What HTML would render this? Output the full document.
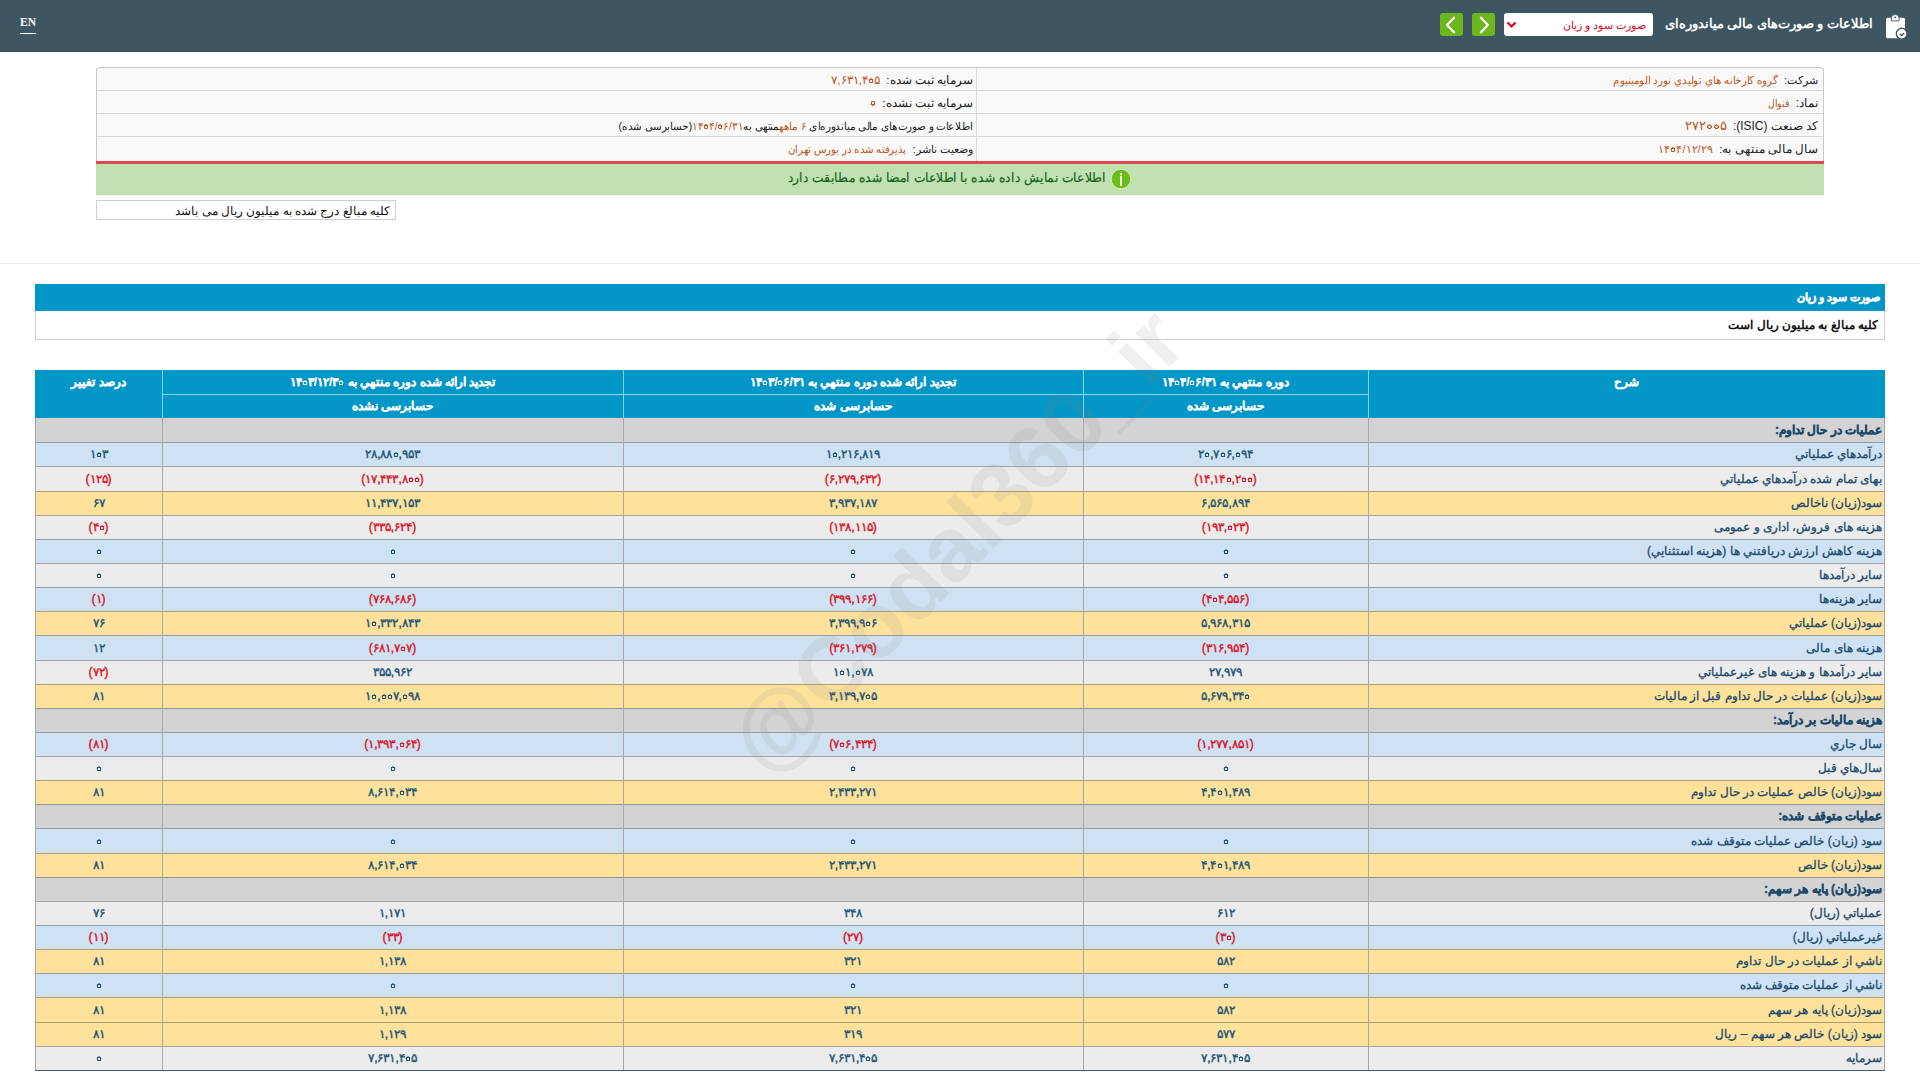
<!DOCTYPE html>
<html lang="fa" dir="rtl"><head><meta charset="utf-8"><title>Codal</title>
<style>
*{box-sizing:border-box}
html,body{margin:0;padding:0}
body{width:1920px;height:1080px;overflow:hidden;background:#fff;position:relative;font-family:"Liberation Sans",sans-serif;color:#222}
.abs{position:absolute}
#hdr{left:0;top:0;width:1920px;height:52px;background:#3e5562;border-bottom:1px solid #3b4a52}
#title{right:47px;top:14px;color:#fff;font-weight:bold;font-size:13px;white-space:nowrap;line-height:20px}
#sel{left:1504px;top:13px;width:149px;height:23px;background:#fff;border-radius:3px}
#sel span{position:absolute;right:6.5px;top:2.5px;font-size:11.3px;color:#d4081a;line-height:18px;white-space:nowrap}
.gbtn{top:13px;width:23px;height:23px;background:#6cb71c;border-radius:3px}
#en{left:20px;top:14px;font-family:"Liberation Serif",serif;color:#fff;font-size:13.5px;font-weight:bold;line-height:16px;text-decoration:underline;text-underline-offset:7px;text-decoration-thickness:1px;transform:scaleX(0.86);transform-origin:left top}
#info{left:96px;top:67px;width:1728px;height:128px;border:1px solid #c8c8c8;border-bottom:none;border-radius:4px 4px 0 0;background:#f9f9f9;overflow:hidden}
.ir{position:absolute;left:0;width:1726px;height:23px;border-bottom:1px solid #dadada}
.ic{position:absolute;top:0;height:23px;line-height:24px;font-size:11px;white-space:nowrap;color:#222}
.ic b{font-weight:normal;color:#c2561a}
#red{left:96px;top:161px;width:1728px;height:3px;background:#e34848}
#green{left:96px;top:164px;width:1728px;height:31px;background:#c1e1b3}
#gtext{right:814px;top:168px;color:#16651b;font-weight:normal;-webkit-text-stroke:0.2px #16651b;font-size:13px;transform:scaleX(0.945);transform-origin:right center;line-height:20px;white-space:nowrap}
#note{left:96px;top:200px;width:300px;height:20px;border:1px solid #cfcfcf;background:#fff}
#note span{position:absolute;right:5px;top:2px;font-size:12px;line-height:17px;color:#111;white-space:nowrap}
#hline{left:0;top:263px;width:1920px;height:1px;background:#ededed}
#tbar{left:35px;top:284px;width:1850px;height:27px;background:#0397c8}
#tbar span{position:absolute;right:5px;top:4px;color:#fff;font-weight:bold;font-size:11.2px;-webkit-text-stroke:0.45px #fff;line-height:18px;white-space:nowrap}
#sub{left:35px;top:311px;width:1850px;height:29px;border:1px solid #cfcfcf;border-top:none;background:#fff}
#sub span{position:absolute;right:6px;top:5px;color:#111;font-weight:bold;font-size:12px;line-height:18px;white-space:nowrap}
#thead{left:35px;top:370px;width:1850px;height:48px;background:#0397c8}
.hv{position:absolute;top:0;width:1px;background:#7fd3ef}
.hh{position:absolute;height:1px;background:#7fd3ef}
.ht{position:absolute;color:#fff;font-weight:bold;font-size:12px;-webkit-text-stroke:0.2px #fff;line-height:18px;white-space:nowrap;text-align:center}
.row{position:absolute;left:35px;width:1850px}
.rl{position:absolute;right:3px;color:#1b4a6b;font-size:12px;white-space:nowrap;-webkit-text-stroke:0.3px #1b4a6b}
.rl.s{font-weight:bold;-webkit-text-stroke:0.35px #1b4a6b}
.n{position:absolute;color:#1c5475;font-size:12px;white-space:nowrap;text-align:center;font-weight:normal;-webkit-text-stroke:0.4px currentColor}
.n.neg{color:#dc1426}
.z{-webkit-text-fill-color:transparent;-webkit-text-stroke-color:transparent;background:radial-gradient(circle at 50% 56%, transparent 1.0px, currentColor 1.3px, currentColor 2.2px, transparent 2.6px)}
.vl{position:absolute;width:1px;background:#a8a8a8}
.hl{position:absolute;left:35px;width:1850px;height:1px;background:rgba(0,0,0,0.3)}
</style></head><body>

<div id="hdr" class="abs"></div>
<svg class="abs" style="left:1884px;top:13px" width="26" height="28" viewBox="0 0 26 28">
<rect x="2" y="4.7" width="19" height="20.5" rx="1.5" fill="#fff"/>
<path d="M7.3 7.9 V5 Q7.3 1.6 11.2 1.6 Q15.1 1.6 15.1 5 V7.9 Z" fill="#fff" stroke="#3e5562" stroke-width="0.9"/>
<circle cx="11.2" cy="4.4" r="0.9" fill="#3e5562"/>
<circle cx="17.7" cy="20.7" r="5.4" fill="#fff" stroke="#3e5562" stroke-width="1.4"/>
<path d="M15.9 21.1 L17.5 22.6 L20.2 19.9" fill="none" stroke="#3e5562" stroke-width="1.4"/>
</svg>
<div id="title" class="abs">اطلاعات و صورت‌های مالی میاندوره‌ای</div>
<div id="sel" class="abs"><span>صورت سود و زیان</span><svg style="position:absolute;left:1.5px;top:7.5px" width="11" height="8" viewBox="0 0 11 8"><path d="M1.5 1.5 L5.5 5.5 L9.5 1.5" fill="none" stroke="#d4081a" stroke-width="2.2"/></svg></div>
<div class="gbtn abs" style="left:1440px"><svg width="23" height="23" viewBox="0 0 23 23"><path d="M14 4.8 L7 12 L14 19.2" fill="none" stroke="#fff" stroke-width="2.3" stroke-linecap="round" stroke-linejoin="round"/></svg></div>
<div class="gbtn abs" style="left:1472px"><svg width="23" height="23" viewBox="0 0 23 23"><path d="M8.9 4.8 L15.9 12 L8.9 19.2" fill="none" stroke="#fff" stroke-width="2.3" stroke-linecap="round" stroke-linejoin="round"/></svg></div>
<div id="en" class="abs" dir="ltr">EN</div>
<div id="info" class="abs">
<div class="ir" style="top:0px"></div>
<div class="ir" style="top:23px"></div>
<div class="ir" style="top:46px"></div>
<div class="ic" style="top:0px;right:5px"><span style="font-size:11px">شرکت:</span><span style="display:inline-block;width:6.5px"></span><b style="display:inline-block;font-size:11px;transform:scaleX(0.93);transform-origin:right center">گروه کارخانه هاي توليدي نورد الومينيوم</b></div>
<div class="ic" style="top:0px;right:850px"><span style="font-size:11.6px">سرمايه ثبت شده:</span><span style="display:inline-block;width:6.5px"></span><b style="display:inline-block;font-size:11.8px;transform:scaleX(1.0);transform-origin:right center">۷,۶۳۱,۴<span class="z">۰</span>۵</b></div>
<div class="ic" style="top:23px;right:5px"><span style="font-size:12px">نماد:</span><span style="display:inline-block;width:6.5px"></span><b style="display:inline-block;font-size:11px;transform:scaleX(0.85);transform-origin:right center">فنوال</b></div>
<div class="ic" style="top:23px;right:850px"><span style="font-size:11.6px">سرمايه ثبت نشده:</span><span style="display:inline-block;width:6.5px"></span><b style="display:inline-block;font-size:11.6px;transform:scaleX(1.0);transform-origin:right center"><span class="z">۰</span></b></div>
<div class="ic" style="top:46px;right:5px"><span style="font-size:11.9px">کد صنعت (ISIC):</span><span style="display:inline-block;width:6.5px"></span><b style="display:inline-block;font-size:12.6px;transform:scaleX(1.0);transform-origin:right center">۲۷۲<span class="z">۰</span><span class="z">۰</span>۵</b></div>
<div class="ic" style="top:46px;right:850px;font-size:11px;transform:scaleX(0.94);transform-origin:right center">اطلاعات و صورت‌های مالی میاندوره‌ای <b>۶ ماهه</b>منتهی به<b>۱۴<span class="z">۰</span>۴/<span class="z">۰</span>۶/۳۱</b>(حسابرسی شده)</div>
<div class="ic" style="top:69px;right:5px"><span style="font-size:11.56px">سال مالی منتهی به:</span><span style="display:inline-block;width:6.5px"></span><b style="display:inline-block;font-size:11.1px;transform:scaleX(1.0);transform-origin:right center">۱۴<span class="z">۰</span>۴/۱۲/۲۹</b></div>
<div class="ic" style="top:69px;right:850px"><span style="font-size:11.35px">وضعیت ناشر:</span><span style="display:inline-block;width:6.5px"></span><b style="display:inline-block;font-size:11px;transform:scaleX(0.93);transform-origin:right center">پذیرفته شده در بورس تهران</b></div>
<div class="abs" style="left:879px;top:0;width:1px;height:128px;background:#dadada"></div>
</div>
<div id="red" class="abs"></div><div id="green" class="abs"></div>
<svg class="abs" style="left:1110px;top:168px" width="22" height="22" viewBox="0 0 22 22"><circle cx="11" cy="11" r="9.8" fill="#6fbb1c" stroke="#d6f2bd" stroke-width="0.9"/><rect x="10" y="5" width="2" height="2.2" fill="#eaffd8"/><rect x="10" y="8" width="2" height="10" fill="#eaffd8"/></svg>
<div id="gtext" class="abs">اطلاعات نمایش داده شده با اطلاعات امضا شده مطابقت دارد</div>
<div id="note" class="abs"><span>کلیه مبالغ درج شده به میلیون ریال می باشد</span></div>
<div id="hline" class="abs"></div>
<div id="tbar" class="abs"><span>صورت سود و زيان</span></div>
<div id="sub" class="abs"><span>کلیه مبالغ به میلیون ریال است</span></div>
<div id="thead" class="abs">
<div class="hv" style="left:127px;height:48px"></div>
<div class="hv" style="left:588px;height:48px"></div>
<div class="hv" style="left:1048px;height:48px"></div>
<div class="hv" style="left:1333px;height:48px"></div>
<div class="hh" style="left:128px;width:1205px;top:24px"></div>
<div class="ht" style="left:1333px;width:517px;top:3px">شرح</div>
<div class="ht" style="left:1048px;width:285px;top:3px">دوره منتهي به ۱۴<span class="z">۰</span>۴/<span class="z">۰</span>۶/۳۱</div>
<div class="ht" style="left:588px;width:460px;top:3px">تجديد ارائه شده دوره منتهي به ۱۴<span class="z">۰</span>۳/<span class="z">۰</span>۶/۳۱</div>
<div class="ht" style="left:127px;width:461px;top:3px">تجديد ارائه شده دوره منتهي به ۱۴<span class="z">۰</span>۳/۱۲/۳<span class="z">۰</span></div>
<div class="ht" style="left:0px;width:127px;top:3px">درصد تغيير</div>
<div class="ht" style="left:1048px;width:285px;top:27px">حسابرسی شده</div>
<div class="ht" style="left:588px;width:460px;top:27px">حسابرسی شده</div>
<div class="ht" style="left:127px;width:461px;top:27px">حسابرسی نشده</div>
</div>
<div class="row" style="top:418px;height:24px;background:#d3d3d3"></div>
<div class="rl s" style="top:421.0px;right:38px;line-height:18px">عمليات در حال تداوم:</div>
<div class="row" style="top:442px;height:24px;background:#cfe2f3"></div>
<div class="rl" style="top:445.0px;right:38px;line-height:18px">درآمدهاي عملياتي</div>
<div class="n" style="left:1083px;width:285px;top:445.0px;line-height:18px">۲<span class="z">۰</span>,۷<span class="z">۰</span>۶,<span class="z">۰</span>۹۴</div>
<div class="n" style="left:623px;width:460px;top:445.0px;line-height:18px">۱<span class="z">۰</span>,۲۱۶,۸۱۹</div>
<div class="n" style="left:162px;width:461px;top:445.0px;line-height:18px">۲۸,۸۸<span class="z">۰</span>,۹۵۳</div>
<div class="n" style="left:35px;width:127px;top:445.0px;line-height:18px">۱<span class="z">۰</span>۳</div>
<div class="row" style="top:466px;height:25px;background:#ececec"></div>
<div class="rl" style="top:469.5px;right:38px;line-height:18px">بهاى تمام شده درآمدهاي عملياتي</div>
<div class="n neg" style="left:1083px;width:285px;top:469.5px;line-height:18px">(۱۴,۱۴<span class="z">۰</span>,۲<span class="z">۰</span><span class="z">۰</span>)</div>
<div class="n neg" style="left:623px;width:460px;top:469.5px;line-height:18px">(۶,۲۷۹,۶۳۲)</div>
<div class="n neg" style="left:162px;width:461px;top:469.5px;line-height:18px">(۱۷,۴۴۳,۸<span class="z">۰</span><span class="z">۰</span>)</div>
<div class="n neg" style="left:35px;width:127px;top:469.5px;line-height:18px">(۱۲۵)</div>
<div class="row" style="top:491px;height:24px;background:#fee29c"></div>
<div class="rl" style="top:494.0px;right:38px;line-height:18px">سود(زيان) ناخالص</div>
<div class="n" style="left:1083px;width:285px;top:494.0px;line-height:18px">۶,۵۶۵,۸۹۴</div>
<div class="n" style="left:623px;width:460px;top:494.0px;line-height:18px">۳,۹۳۷,۱۸۷</div>
<div class="n" style="left:162px;width:461px;top:494.0px;line-height:18px">۱۱,۴۳۷,۱۵۳</div>
<div class="n" style="left:35px;width:127px;top:494.0px;line-height:18px">۶۷</div>
<div class="row" style="top:515px;height:24px;background:#ececec"></div>
<div class="rl" style="top:518.0px;right:38px;line-height:18px">هزينه هاى فروش، ادارى و عمومى</div>
<div class="n neg" style="left:1083px;width:285px;top:518.0px;line-height:18px">(۱۹۳,<span class="z">۰</span>۲۳)</div>
<div class="n neg" style="left:623px;width:460px;top:518.0px;line-height:18px">(۱۳۸,۱۱۵)</div>
<div class="n neg" style="left:162px;width:461px;top:518.0px;line-height:18px">(۳۳۵,۶۲۴)</div>
<div class="n neg" style="left:35px;width:127px;top:518.0px;line-height:18px">(۴<span class="z">۰</span>)</div>
<div class="row" style="top:539px;height:24px;background:#cfe2f3"></div>
<div class="rl" style="top:542.0px;right:38px;line-height:18px">هزينه كاهش ارزش دريافتني ها (هزينه استثنايي)</div>
<div class="n" style="left:1083px;width:285px;top:542.0px;line-height:18px"><span class="z">۰</span></div>
<div class="n" style="left:623px;width:460px;top:542.0px;line-height:18px"><span class="z">۰</span></div>
<div class="n" style="left:162px;width:461px;top:542.0px;line-height:18px"><span class="z">۰</span></div>
<div class="n" style="left:35px;width:127px;top:542.0px;line-height:18px"><span class="z">۰</span></div>
<div class="row" style="top:563px;height:24px;background:#ececec"></div>
<div class="rl" style="top:566.0px;right:38px;line-height:18px">ساير درآمدها</div>
<div class="n" style="left:1083px;width:285px;top:566.0px;line-height:18px"><span class="z">۰</span></div>
<div class="n" style="left:623px;width:460px;top:566.0px;line-height:18px"><span class="z">۰</span></div>
<div class="n" style="left:162px;width:461px;top:566.0px;line-height:18px"><span class="z">۰</span></div>
<div class="n" style="left:35px;width:127px;top:566.0px;line-height:18px"><span class="z">۰</span></div>
<div class="row" style="top:587px;height:24px;background:#cfe2f3"></div>
<div class="rl" style="top:590.0px;right:38px;line-height:18px">ساير هزينه‌ها</div>
<div class="n neg" style="left:1083px;width:285px;top:590.0px;line-height:18px">(۴<span class="z">۰</span>۴,۵۵۶)</div>
<div class="n neg" style="left:623px;width:460px;top:590.0px;line-height:18px">(۳۹۹,۱۶۶)</div>
<div class="n neg" style="left:162px;width:461px;top:590.0px;line-height:18px">(۷۶۸,۶۸۶)</div>
<div class="n neg" style="left:35px;width:127px;top:590.0px;line-height:18px">(۱)</div>
<div class="row" style="top:611px;height:24px;background:#fee29c"></div>
<div class="rl" style="top:614.0px;right:38px;line-height:18px">سود(زيان) عملياتي</div>
<div class="n" style="left:1083px;width:285px;top:614.0px;line-height:18px">۵,۹۶۸,۳۱۵</div>
<div class="n" style="left:623px;width:460px;top:614.0px;line-height:18px">۳,۳۹۹,۹<span class="z">۰</span>۶</div>
<div class="n" style="left:162px;width:461px;top:614.0px;line-height:18px">۱<span class="z">۰</span>,۳۳۲,۸۴۳</div>
<div class="n" style="left:35px;width:127px;top:614.0px;line-height:18px">۷۶</div>
<div class="row" style="top:635px;height:25px;background:#cfe2f3"></div>
<div class="rl" style="top:638.5px;right:38px;line-height:18px">هزينه هاى مالى</div>
<div class="n neg" style="left:1083px;width:285px;top:638.5px;line-height:18px">(۳۱۶,۹۵۴)</div>
<div class="n neg" style="left:623px;width:460px;top:638.5px;line-height:18px">(۳۶۱,۲۷۹)</div>
<div class="n neg" style="left:162px;width:461px;top:638.5px;line-height:18px">(۶۸۱,۷<span class="z">۰</span>۷)</div>
<div class="n" style="left:35px;width:127px;top:638.5px;line-height:18px">۱۲</div>
<div class="row" style="top:660px;height:24px;background:#ececec"></div>
<div class="rl" style="top:663.0px;right:38px;line-height:18px">ساير درآمدها و هزينه هاى غيرعملياتي</div>
<div class="n" style="left:1083px;width:285px;top:663.0px;line-height:18px">۲۷,۹۷۹</div>
<div class="n" style="left:623px;width:460px;top:663.0px;line-height:18px">۱<span class="z">۰</span>۱,<span class="z">۰</span>۷۸</div>
<div class="n" style="left:162px;width:461px;top:663.0px;line-height:18px">۳۵۵,۹۶۲</div>
<div class="n neg" style="left:35px;width:127px;top:663.0px;line-height:18px">(۷۲)</div>
<div class="row" style="top:684px;height:24px;background:#fee29c"></div>
<div class="rl" style="top:687.0px;right:38px;line-height:18px">سود(زيان) عمليات در حال تداوم قبل از ماليات</div>
<div class="n" style="left:1083px;width:285px;top:687.0px;line-height:18px">۵,۶۷۹,۳۴<span class="z">۰</span></div>
<div class="n" style="left:623px;width:460px;top:687.0px;line-height:18px">۳,۱۳۹,۷<span class="z">۰</span>۵</div>
<div class="n" style="left:162px;width:461px;top:687.0px;line-height:18px">۱<span class="z">۰</span>,<span class="z">۰</span><span class="z">۰</span>۷,<span class="z">۰</span>۹۸</div>
<div class="n" style="left:35px;width:127px;top:687.0px;line-height:18px">۸۱</div>
<div class="row" style="top:708px;height:24px;background:#d3d3d3"></div>
<div class="rl s" style="top:711.0px;right:38px;line-height:18px">هزينه ماليات بر درآمد:</div>
<div class="row" style="top:732px;height:24px;background:#cfe2f3"></div>
<div class="rl" style="top:735.0px;right:38px;line-height:18px">سال جاري</div>
<div class="n neg" style="left:1083px;width:285px;top:735.0px;line-height:18px">(۱,۲۷۷,۸۵۱)</div>
<div class="n neg" style="left:623px;width:460px;top:735.0px;line-height:18px">(۷<span class="z">۰</span>۶,۴۳۴)</div>
<div class="n neg" style="left:162px;width:461px;top:735.0px;line-height:18px">(۱,۳۹۳,<span class="z">۰</span>۶۴)</div>
<div class="n neg" style="left:35px;width:127px;top:735.0px;line-height:18px">(۸۱)</div>
<div class="row" style="top:756px;height:24px;background:#ececec"></div>
<div class="rl" style="top:759.0px;right:38px;line-height:18px">سال‌هاي قبل</div>
<div class="n" style="left:1083px;width:285px;top:759.0px;line-height:18px"><span class="z">۰</span></div>
<div class="n" style="left:623px;width:460px;top:759.0px;line-height:18px"><span class="z">۰</span></div>
<div class="n" style="left:162px;width:461px;top:759.0px;line-height:18px"><span class="z">۰</span></div>
<div class="n" style="left:35px;width:127px;top:759.0px;line-height:18px"><span class="z">۰</span></div>
<div class="row" style="top:780px;height:24px;background:#fee29c"></div>
<div class="rl" style="top:783.0px;right:38px;line-height:18px">سود(زيان) خالص عمليات در حال تداوم</div>
<div class="n" style="left:1083px;width:285px;top:783.0px;line-height:18px">۴,۴<span class="z">۰</span>۱,۴۸۹</div>
<div class="n" style="left:623px;width:460px;top:783.0px;line-height:18px">۲,۴۳۳,۲۷۱</div>
<div class="n" style="left:162px;width:461px;top:783.0px;line-height:18px">۸,۶۱۴,<span class="z">۰</span>۳۴</div>
<div class="n" style="left:35px;width:127px;top:783.0px;line-height:18px">۸۱</div>
<div class="row" style="top:804px;height:24px;background:#d3d3d3"></div>
<div class="rl s" style="top:807.0px;right:38px;line-height:18px">عمليات متوقف شده:</div>
<div class="row" style="top:828px;height:25px;background:#cfe2f3"></div>
<div class="rl" style="top:831.5px;right:38px;line-height:18px">سود (زيان) خالص عمليات متوقف شده</div>
<div class="n" style="left:1083px;width:285px;top:831.5px;line-height:18px"><span class="z">۰</span></div>
<div class="n" style="left:623px;width:460px;top:831.5px;line-height:18px"><span class="z">۰</span></div>
<div class="n" style="left:162px;width:461px;top:831.5px;line-height:18px"><span class="z">۰</span></div>
<div class="n" style="left:35px;width:127px;top:831.5px;line-height:18px"><span class="z">۰</span></div>
<div class="row" style="top:853px;height:24px;background:#fee29c"></div>
<div class="rl" style="top:856.0px;right:38px;line-height:18px">سود(زيان) خالص</div>
<div class="n" style="left:1083px;width:285px;top:856.0px;line-height:18px">۴,۴<span class="z">۰</span>۱,۴۸۹</div>
<div class="n" style="left:623px;width:460px;top:856.0px;line-height:18px">۲,۴۳۳,۲۷۱</div>
<div class="n" style="left:162px;width:461px;top:856.0px;line-height:18px">۸,۶۱۴,<span class="z">۰</span>۳۴</div>
<div class="n" style="left:35px;width:127px;top:856.0px;line-height:18px">۸۱</div>
<div class="row" style="top:877px;height:24px;background:#d3d3d3"></div>
<div class="rl s" style="top:880.0px;right:38px;line-height:18px">سود(زيان) پايه هر سهم:</div>
<div class="row" style="top:901px;height:24px;background:#ececec"></div>
<div class="rl" style="top:904.0px;right:38px;line-height:18px">عملياتي (ريال)</div>
<div class="n" style="left:1083px;width:285px;top:904.0px;line-height:18px">۶۱۲</div>
<div class="n" style="left:623px;width:460px;top:904.0px;line-height:18px">۳۴۸</div>
<div class="n" style="left:162px;width:461px;top:904.0px;line-height:18px">۱,۱۷۱</div>
<div class="n" style="left:35px;width:127px;top:904.0px;line-height:18px">۷۶</div>
<div class="row" style="top:925px;height:24px;background:#cfe2f3"></div>
<div class="rl" style="top:928.0px;right:38px;line-height:18px">غيرعملياتي (ريال)</div>
<div class="n neg" style="left:1083px;width:285px;top:928.0px;line-height:18px">(۳<span class="z">۰</span>)</div>
<div class="n neg" style="left:623px;width:460px;top:928.0px;line-height:18px">(۲۷)</div>
<div class="n neg" style="left:162px;width:461px;top:928.0px;line-height:18px">(۳۳)</div>
<div class="n neg" style="left:35px;width:127px;top:928.0px;line-height:18px">(۱۱)</div>
<div class="row" style="top:949px;height:24px;background:#fee29c"></div>
<div class="rl" style="top:952.0px;right:38px;line-height:18px">ناشي از عمليات در حال تداوم</div>
<div class="n" style="left:1083px;width:285px;top:952.0px;line-height:18px">۵۸۲</div>
<div class="n" style="left:623px;width:460px;top:952.0px;line-height:18px">۳۲۱</div>
<div class="n" style="left:162px;width:461px;top:952.0px;line-height:18px">۱,۱۳۸</div>
<div class="n" style="left:35px;width:127px;top:952.0px;line-height:18px">۸۱</div>
<div class="row" style="top:973px;height:24px;background:#cfe2f3"></div>
<div class="rl" style="top:976.0px;right:38px;line-height:18px">ناشي از عمليات متوقف شده</div>
<div class="n" style="left:1083px;width:285px;top:976.0px;line-height:18px"><span class="z">۰</span></div>
<div class="n" style="left:623px;width:460px;top:976.0px;line-height:18px"><span class="z">۰</span></div>
<div class="n" style="left:162px;width:461px;top:976.0px;line-height:18px"><span class="z">۰</span></div>
<div class="n" style="left:35px;width:127px;top:976.0px;line-height:18px"><span class="z">۰</span></div>
<div class="row" style="top:997px;height:25px;background:#fee29c"></div>
<div class="rl" style="top:1000.5px;right:38px;line-height:18px">سود(زيان) پايه هر سهم</div>
<div class="n" style="left:1083px;width:285px;top:1000.5px;line-height:18px">۵۸۲</div>
<div class="n" style="left:623px;width:460px;top:1000.5px;line-height:18px">۳۲۱</div>
<div class="n" style="left:162px;width:461px;top:1000.5px;line-height:18px">۱,۱۳۸</div>
<div class="n" style="left:35px;width:127px;top:1000.5px;line-height:18px">۸۱</div>
<div class="row" style="top:1022px;height:24px;background:#fee29c"></div>
<div class="rl" style="top:1025.0px;right:38px;line-height:18px">سود (زيان) خالص هر سهم – ريال</div>
<div class="n" style="left:1083px;width:285px;top:1025.0px;line-height:18px">۵۷۷</div>
<div class="n" style="left:623px;width:460px;top:1025.0px;line-height:18px">۳۱۹</div>
<div class="n" style="left:162px;width:461px;top:1025.0px;line-height:18px">۱,۱۲۹</div>
<div class="n" style="left:35px;width:127px;top:1025.0px;line-height:18px">۸۱</div>
<div class="row" style="top:1046px;height:24px;background:#ececec"></div>
<div class="rl" style="top:1049.0px;right:38px;line-height:18px">سرمايه</div>
<div class="n" style="left:1083px;width:285px;top:1049.0px;line-height:18px">۷,۶۳۱,۴<span class="z">۰</span>۵</div>
<div class="n" style="left:623px;width:460px;top:1049.0px;line-height:18px">۷,۶۳۱,۴<span class="z">۰</span>۵</div>
<div class="n" style="left:162px;width:461px;top:1049.0px;line-height:18px">۷,۶۳۱,۴<span class="z">۰</span>۵</div>
<div class="n" style="left:35px;width:127px;top:1049.0px;line-height:18px"><span class="z">۰</span></div>
<div class="hl abs" style="top:442px"></div>
<div class="hl abs" style="top:466px"></div>
<div class="hl abs" style="top:491px"></div>
<div class="hl abs" style="top:515px"></div>
<div class="hl abs" style="top:539px"></div>
<div class="hl abs" style="top:563px"></div>
<div class="hl abs" style="top:587px"></div>
<div class="hl abs" style="top:611px"></div>
<div class="hl abs" style="top:635px"></div>
<div class="hl abs" style="top:660px"></div>
<div class="hl abs" style="top:684px"></div>
<div class="hl abs" style="top:708px"></div>
<div class="hl abs" style="top:732px"></div>
<div class="hl abs" style="top:756px"></div>
<div class="hl abs" style="top:780px"></div>
<div class="hl abs" style="top:804px"></div>
<div class="hl abs" style="top:828px"></div>
<div class="hl abs" style="top:853px"></div>
<div class="hl abs" style="top:877px"></div>
<div class="hl abs" style="top:901px"></div>
<div class="hl abs" style="top:925px"></div>
<div class="hl abs" style="top:949px"></div>
<div class="hl abs" style="top:973px"></div>
<div class="hl abs" style="top:997px"></div>
<div class="hl abs" style="top:1022px"></div>
<div class="hl abs" style="top:1046px"></div>
<div class="vl abs" style="left:35px;top:418px;height:652px"></div>
<div class="vl abs" style="left:162px;top:418px;height:652px"></div>
<div class="vl abs" style="left:623px;top:418px;height:652px"></div>
<div class="vl abs" style="left:1083px;top:418px;height:652px"></div>
<div class="vl abs" style="left:1368px;top:418px;height:652px"></div>
<div class="vl abs" style="left:1884px;top:418px;height:652px"></div>
<div class="abs" style="left:35px;top:1070px;width:1850px;height:1px;background:#3f5f77"></div>
<svg class="abs" style="left:0;top:0;pointer-events:none" width="1920" height="1080" direction="ltr"><text x="0" y="0" direction="ltr" transform="translate(768 779) rotate(-45.7)" font-family="Liberation Sans" font-weight="bold" font-size="91" fill="#808080" fill-opacity="0.12">@Codal360_ir</text></svg>
</body></html>
